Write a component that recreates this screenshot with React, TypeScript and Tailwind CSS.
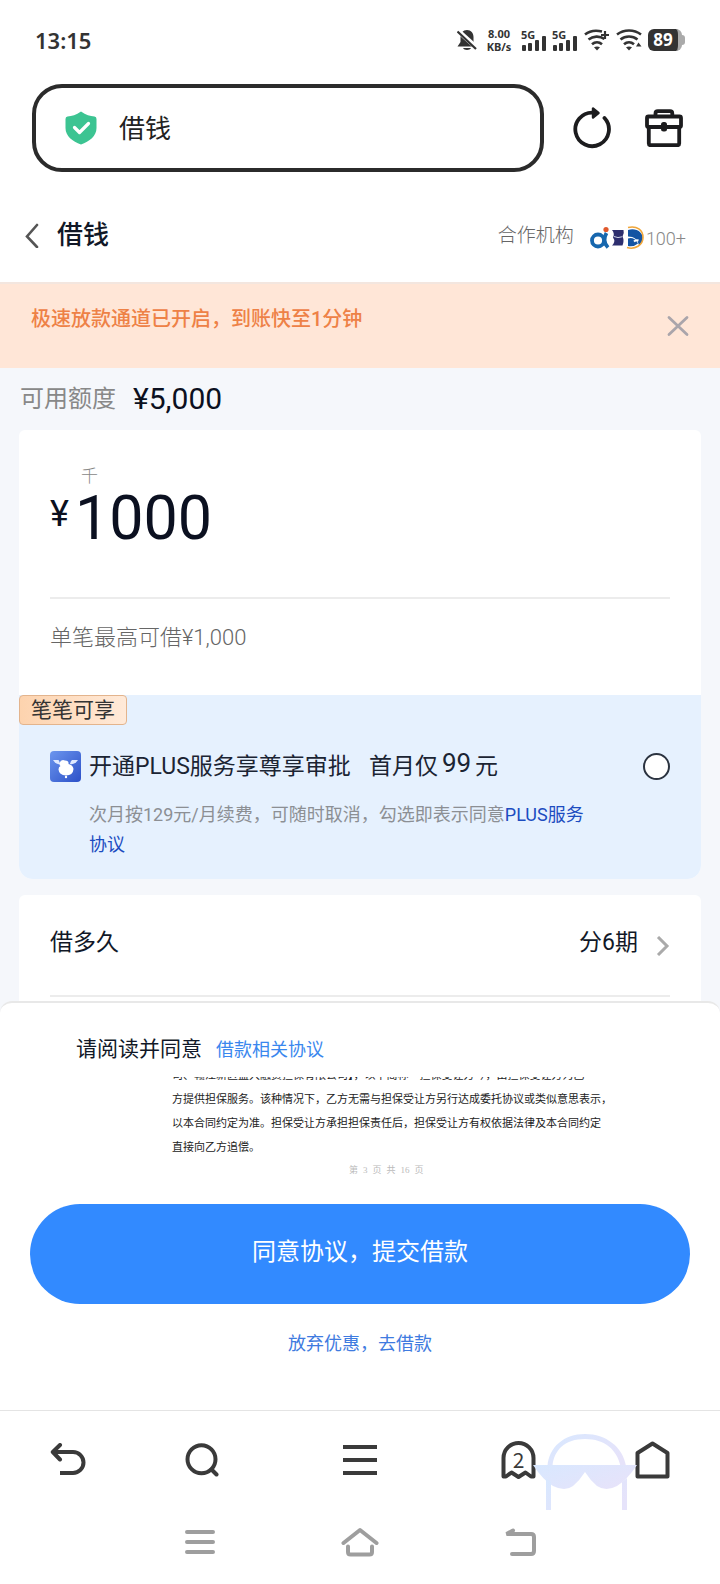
import React, { useState } from 'react';

const contractLines = [
  '司、赣江新区盈大融资担保有限公司】，以下简称“担保受让方”），由担保受让方为乙',
  '方提供担保服务。该种情况下，乙方无需与担保受让方另行达成委托协议或类似意思表示，',
  '以本合同约定为准。担保受让方承担担保责任后，担保受让方有权依据法律及本合同约定',
  '直接向乙方追偿。',
];

const Signal5G: React.FC = () => (
  <svg width="26" height="26" viewBox="0 0 26 26" fill="#333">
    <text x="0" y="12" fontSize="11" fontWeight="700" fontFamily="Noto Sans, sans-serif">5G</text>
    <rect x="1" y="18" width="4" height="6" rx="1" />
    <rect x="7" y="16" width="4" height="8" rx="1" />
    <rect x="14" y="13" width="4" height="11" rx="1" />
    <rect x="21" y="9" width="4" height="15" rx="1" />
  </svg>
);

const Wifi: React.FC<{ plus?: boolean }> = ({ plus }) => (
  <svg width="26" height="22" viewBox="0 0 26 22" fill="none" stroke="#333" strokeWidth="2.6">
    {plus ? <path d="M1 5.5C6 1.500 12 1 18 2.500" /> : <path d="M1 5.5C8 .2 18 .2 25 5.5" />}
    <path d={plus ? 'M4.500 10.500C9 7 15.500 6.500 20.500 10' : 'M4.500 10.500C9.500 6.500 16.500 6.500 21.500 10.500'} />
    <path d="M8 15.200C11 12.600 15 12.600 18 15.200" />
    <path d="M10 18.200q3-1.500 6 0L13 21.500z" fill="#333" stroke="none" />
    {plus ? <path d="M21 2v8M17 6h8" strokeWidth="2.200" /> : <path d="M20 17.500L22.500 13.500 25.500 17.500z" fill="#333" stroke="none" />}
  </svg>
);

const StatusBar: React.FC = () => (
  <div className="flex h-20 items-center justify-between px-[35px] text-[#333]">
    <span className="font-['Noto_Sans','Noto_Sans_CJK_SC',sans-serif] text-[22px] font-semibold">13:15</span>
    <div className="flex items-center gap-1.5">
      <svg width="20" height="22" viewBox="0 0 20 22" className="mr-0.5">
        <path d="M10 1c4 0 6.500 3 6.500 7v5l3 4.500H.5l3-4.500V8c0-4 2.500-7 6.500-7z" fill="#333" />
        <path d="M6 19h8c-1 2.600-7 2.600-8 0z" fill="#333" />
        <path d="M0 1l20 18" stroke="#fff" strokeWidth="5" />
        <path d="M.5 2.500L19 20" stroke="#333" strokeWidth="2.200" />
      </svg>
      <div className="mr-0.5 w-[28px] text-center font-['Noto_Sans',sans-serif] text-[11px] leading-[13px] font-bold">
        <div>8.00</div>
        <div>KB/s</div>
      </div>
      <div className="flex gap-[5px]">
        <Signal5G />
        <Signal5G />
      </div>
      <Wifi plus />
      <Wifi />
      <div className="flex items-center">
        <div className="flex h-[22px] w-[34px] items-center justify-center rounded-md border-r-4 border-[#aaa] bg-[#333] font-['Noto_Sans',sans-serif] text-[17px] font-bold text-white">
          89
        </div>
        <div className="h-2.5 w-[3px] rounded-r-sm bg-[#aaa]" />
      </div>
    </div>
  </div>
);

const AddressBar: React.FC = () => (
  <div className="flex items-center gap-[29px] pt-1 pr-[37px] pl-8">
    <label className="flex h-[88px] min-w-0 flex-1 items-center gap-[22px] rounded-[30px] border-4 border-[#2b2b2b] pl-[29px]">
      <svg width="32" height="34" viewBox="0 0 32 34" className="shrink-0">
        <path d="M16 .5c5 3.500 9 4.500 13.500 5Q31.500 5.700 31.500 8v9c0 8-7 13.500-15.500 16.500C7.500 30.500.5 25 .5 17V8Q.5 5.700 2.500 5.500C7 5 11 4 16 .5z" fill="#3cc492" />
        <path d="M9.500 16.500l5 5 9-9" fill="none" stroke="#fff" strokeWidth="3.200" strokeLinecap="round" strokeLinejoin="round" />
      </svg>
      <input aria-label="地址栏" defaultValue="借钱" className="w-full min-w-0 bg-transparent pt-0.5 text-[26px] text-[#222] outline-none" />
    </label>
    <div className="flex items-center gap-[34px]">
      <button aria-label="刷新">
        <svg width="38" height="42" viewBox="0 0 38 42" fill="none" stroke="#1c1c1e" strokeWidth="3.800" strokeLinecap="round">
          <path d="M31.500 11A16.800 16.800 0 1 1 20 5.600" />
          <path d="M20 1.500v9l5.500-4.500z" fill="#1c1c1e" strokeWidth="2.400" strokeLinejoin="round" />
        </svg>
      </button>
      <button aria-label="工具箱">
        <svg width="38" height="38" viewBox="0 0 38 38" fill="none" stroke="#1c1c1e" strokeWidth="3.800" strokeLinejoin="round">
          <path d="M10.500 7.500V4.500Q10.500 2.200 12.800 2.200H25Q27.300 2.200 27.300 4.500V7.500" />
          <rect x="2" y="7.500" width="34" height="10.500" rx="1.500" />
          <path d="M3.800 18V34.500Q3.800 36.200 5.500 36.200H32.500Q34.200 36.200 34.200 34.500V18" />
          <rect x="16" y="13" width="6" height="9.500" rx="2.500" fill="#1c1c1e" stroke="none" />
        </svg>
      </button>
    </div>
  </div>
);

const PageHeader: React.FC = () => (
  <header className="flex h-[110px] items-center justify-between pt-4 pr-[34px] pl-[25px]">
    <div className="flex items-center gap-[18px]">
      <button aria-label="返回">
        <svg width="14" height="26" viewBox="0 0 14 26" fill="none" stroke="#555" strokeWidth="2.600" strokeLinecap="round">
          <path d="M12 3L2 14.500 12 25" />
        </svg>
      </button>
      <h1 className="text-[26px] font-medium text-[#111827]">借钱</h1>
    </div>
    <div className="flex items-center">
      <span className="mr-4 pt-0.5 text-[19px] font-light text-[#666]">合作机构</span>
      <svg width="54" height="24" viewBox="0 0 54 24" className="mt-1.5">
        <circle cx="8" cy="14.500" r="6" fill="none" stroke="#1767ae" strokeWidth="3.800" />
        <path d="M16.500 7c-3 5-3 10 1.500 14.500" fill="none" stroke="#1767ae" strokeWidth="3.800" />
        <circle cx="16" cy="3.500" r="2.600" fill="#e0592c" />
        <path d="M22 4h11.500q1 3-1 6.500 2 4 0 9H22q4-4 1-8 2-4-1-7.500z" fill="#2d2e6e" />
        <path d="M24 10.500q4 2 8 .3" fill="none" stroke="#cdd3e8" strokeWidth="1" />
        <path d="M38 4c8-2.500 15 2 15 9-.5 3-2 5-4 6.500-1-6-5-9-11-9z" fill="#1454a3" />
        <path d="M38 20v-7.500q6-2 10 5-4 3.500-10 2.500z" fill="#1454a3" />
        <path d="M44 15.500q2-2 4.500-1" fill="none" stroke="#fff" strokeWidth="2" />
        <path d="M38 1.500C47-.5 53 4 53 11.500S45 24 37 21.500" fill="none" stroke="#f0a63a" strokeWidth="1.600" />
      </svg>
      <span className="ml-0.5 pt-2 text-lg font-light text-[#888]">100+</span>
    </div>
  </header>
);

const PromoBanner: React.FC = () => (
  <div className="flex h-[86px] items-center justify-between border-t-2 border-[#f3e6df] bg-[#ffe6d7] px-[31px]">
    <p className="pb-3.5 text-xl font-medium text-[#ee8146]">极速放款通道已开启，到账快至1分钟</p>
    <button aria-label="关闭">
      <svg width="22" height="22" viewBox="0 0 22 22" stroke="#aaa5ab" strokeWidth="2.800" strokeLinecap="round">
        <path d="M2 2.500l18 17M20 2.500L2 19.500" />
      </svg>
    </button>
  </div>
);

const PlusOffer: React.FC = () => {
  const [joined, setJoined] = useState(false);

  return (
    <section className="rounded-b-[14px] bg-[#e6f1fe] pb-[19px]">
      <span className="flex h-[30px] w-[108px] items-center justify-center rounded-sm border border-[#e3b48d] bg-linear-to-r from-[#fdd3ae] to-[#ffead9] pt-0.5 text-[21px] text-[#333]">
        笔笔可享
      </span>
      <div className="mt-[26px] flex h-[31px] items-center pr-[31px] pl-[31px]">
        <svg width="31" height="31" viewBox="0 0 31 31">
          <defs>
            <linearGradient id="plusBg" x1="0" y1="0" x2="1" y2="1">
              <stop offset="0" stopColor="#6c96ee" />
              <stop offset="1" stopColor="#2c50c8" />
            </linearGradient>
          </defs>
          <rect width="31" height="31" rx="4" fill="url(#plusBg)" />
          <path d="M3 9h5.500q1 1 1.500 4-4 1-7-4zM28 9h-6q-1.500 1-2 4 5 1 8-4z" fill="#dfe9ff" />
          <path d="M9.500 12Q11 8 15 9.500Q19 9.500 18.500 13Q23 14 23.500 18Q23 24.500 16 24.500Q9 24 8.500 18.500Q8.500 15.500 10.500 15Q9 14 9.500 12z" fill="#fff" />
          <circle cx="16" cy="26" r="1.200" fill="#fff" />
        </svg>
        <label htmlFor="plus" className="ml-2 flex flex-1 items-center pt-0.5 text-[23px] text-[#1b2433]">
          <span>开通PLUS服务享尊享审批</span>
          <span className="ml-[18px]">首月仅</span>
          <span className="mx-1 pb-2 text-[26px]">99</span>
          <span>元</span>
        </label>
        <input
          id="plus"
          type="radio"
          checked={joined}
          onChange={() => setJoined(true)}
          className="size-[27px] appearance-none rounded-full border-2 border-[#2b3340] bg-white checked:bg-[#328aff]"
        />
      </div>
      <p className="mt-[18px] pr-[112px] pl-[70px] text-lg leading-[30px] text-[#8c8f94]">
        次月按129元/月续费，可随时取消，勾选即表示同意
        <a href="#plus-terms" className="text-[#1c4cc0]">PLUS服务协议</a>
      </p>
    </section>
  );
};

const LoanForm: React.FC = () => {
  const [amount, setAmount] = useState('1000');

  return (
    <main className="bg-[#f5f7fb] px-[19px]">
      <div className="flex h-[62px] items-center gap-[17px] pl-px">
        <span className="text-2xl text-[#888]">可用额度</span>
        <span className="text-3xl text-[#0b1020]">¥5,000</span>
      </div>

      <div className="rounded-t-md rounded-b-[14px] bg-white">
        <div className="px-[31px] pt-9 pb-5">
          <div className="pl-[31px] text-[17px] leading-5 font-light text-[#888]">千</div>
          <div className="flex h-16 items-center">
            <label htmlFor="amount" className="w-[26px] pb-2 text-4xl text-[#0b1020]">¥</label>
            <input
              id="amount"
              value={amount}
              onChange={(e) => setAmount(e.target.value)}
              className="h-16 w-full min-w-0 bg-transparent text-[61px] leading-none text-[#0b1020] outline-none"
            />
          </div>
          <div className="mt-[47px] flex h-[78px] items-center border-t-2 border-[#ececec] text-[22px] font-light text-[#666]">
            单笔最高可借¥1,000
          </div>
        </div>
        <PlusOffer />
      </div>

      <div className="mt-4 rounded-t-md bg-white px-[31px] pb-1">
        <button className="flex h-[94px] w-full items-center pt-0.5 text-[23px] text-[#111827]">
          <span className="flex-1 text-left">借多久</span>
          <span className="mr-[18px]">分6期</span>
          <svg width="14" height="20" viewBox="0 0 14 20" fill="none" stroke="#aaa" strokeWidth="3" className="mt-1.5">
            <path d="M2 1l9 9-9 9" />
          </svg>
        </button>
        <div className="mt-1.5 border-t-2 border-[#ececec]" />
      </div>
    </main>
  );
};

const AgreementSheet: React.FC = () => (
  <div className="bg-[#f5f7fb]">
    <section className="rounded-t-xl border-t-2 border-[#e8e8e8] bg-white px-[30px] pt-8 pb-12">
      <div className="flex h-[30px] items-center gap-3.5 pl-[46px]">
        <span className="text-[21px] text-[#111827]">请阅读并同意</span>
        <a href="#loan-terms" className="text-lg text-[#3a87ee]">借款相关协议</a>
      </div>

      {/* Contract preview, scrolled to the end of the page */}
      <div className="mt-3 flex h-[103px] flex-col justify-end overflow-hidden pl-[142px] font-['Liberation_Serif','Noto_Sans_CJK_SC',serif]">
        <div className="font-['Noto_Sans_CJK_SC',sans-serif] text-[11px] leading-6 whitespace-nowrap text-[#222]">
          {contractLines.map((line) => (
            <div key={line}>{line}</div>
          ))}
        </div>
        <div className="flex h-[22px] shrink-0 items-center gap-[5px] pt-1 pl-[177px] text-[9px] text-[#bbb]">
          <span>第</span>
          <span>3</span>
          <span>页</span>
          <span>共</span>
          <span>16</span>
          <span>页</span>
        </div>
      </div>

      <button className="mt-6 flex h-[100px] w-full items-center justify-center rounded-full bg-[#328aff] pb-1 text-2xl text-white">
        同意协议，提交借款
      </button>
      <button className="mt-[22px] block h-9 w-full text-center text-lg text-[#3f7be0]">放弃优惠，去借款</button>
    </section>
  </div>
);

const BrowserToolbar: React.FC = () => (
  <nav className="relative grid h-[101px] grid-cols-[136fr_132fr_184fr_132fr_136fr] items-center justify-items-center border-t border-[#e4e4e4] pb-0.5">
    <button aria-label="后退">
      <svg width="36" height="34" viewBox="0 0 36 34" fill="none" stroke="#3a3a3a" strokeWidth="4">
        <path d="M3 9H23a10.500 10.500 0 0 1 0 21H10" />
        <path d="M10 2L2.800 9l7.200 7.500" strokeLinecap="round" strokeLinejoin="round" />
      </svg>
    </button>
    <button aria-label="搜索">
      <svg width="34" height="34" viewBox="0 0 34 34" fill="none" stroke="#3a3a3a" strokeWidth="4">
        <circle cx="16.500" cy="16.300" r="14" />
        <path d="M26.500 26.500l5 5" strokeLinecap="round" />
      </svg>
    </button>
    <button aria-label="菜单">
      <svg width="34" height="32" viewBox="0 0 34 32" stroke="#3a3a3a" strokeWidth="4">
        <path d="M0 3h34M0 16h34M0 29h34" />
      </svg>
    </button>
    <button aria-label="标签页">
      <svg width="35" height="38" viewBox="0 0 35 38" fill="none" stroke="#3a3a3a" strokeWidth="4" strokeLinejoin="round">
        <path d="M2.500 35.500L5 35.500L10.500 31.500l7 4.500 7-4.500L30 35.500H32.500V17a15 15 0 0 0-30 0z" />
        <text x="17.500" y="27" textAnchor="middle" fontSize="21" fontFamily="Noto Sans CJK SC, sans-serif" fill="#3a3a3a" stroke="none">2</text>
      </svg>
    </button>
    <button aria-label="主页">
      <svg width="35" height="38" viewBox="0 0 35 38" fill="none" stroke="#3a3a3a" strokeWidth="4" strokeLinejoin="round">
        <path d="M2.500 12L17.500 2.500l15 9.500V35.500h-30z" />
      </svg>
    </button>

    {/* Incognito mascot peeking over the toolbar */}
    <svg width="104" height="77" viewBox="0 0 104 77" className="pointer-events-none absolute top-[23px] right-[83px]">
      <defs>
        <linearGradient id="mascot" x1="0" y1="0" x2="1" y2="0.6">
          <stop offset="0" stopColor="#d8e8ff" />
          <stop offset="1" stopColor="#e6e3fa" />
        </linearGradient>
      </defs>
      <g fill="url(#mascot)">
        <path d="M14.500 32C16 13 31 0 52 0s38 13 41 32h-5.500C84 16 72 5 52 5S21 16 19.500 32z" />
        <path d="M0 31H104Q94 46 84 52Q73 58 64 52Q57 46 52 38Q47 46 40 52Q32 58 20 52Q10 46 0 31z" />
        <path d="M13 44l5 4V76h-5zM89 48l5-4V76h-5z" />
      </g>
    </svg>
  </nav>
);

const SystemNav: React.FC = () => (
  <div className="grid h-[73px] grid-cols-3 items-center justify-items-center px-[120px] pb-3">
    <button aria-label="最近任务">
      <svg width="30" height="26" viewBox="0 0 30 26" stroke="#9e9e9e" strokeWidth="4" strokeLinecap="round">
        <path d="M2 3h26M2 13h26M2 23h26" />
      </svg>
    </button>
    <button aria-label="桌面">
      <svg width="38" height="30" viewBox="0 0 38 30" fill="none" stroke="#9e9e9e" strokeWidth="4" strokeLinecap="round" strokeLinejoin="round">
        <path d="M2.500 16L19 3l16.500 13" />
        <path d="M7 19.500V25q0 2.500 2.500 2.500h19Q31 27.500 31 25v-5.500" />
      </svg>
    </button>
    <button aria-label="系统返回">
      <svg width="32" height="28" viewBox="0 0 32 28" fill="none" stroke="#9e9e9e" strokeWidth="4" strokeLinecap="round">
        <path d="M9 2.500L2.500 6H27q3 0 3 3V23q0 3-3 3H8" />
      </svg>
    </button>
  </div>
);

const App: React.FC = () => (
  <div className="min-h-screen w-full bg-white font-['Roboto','Noto_Sans_CJK_SC',sans-serif]">
    <StatusBar />
    <AddressBar />
    <PageHeader />
    <PromoBanner />
    <LoanForm />
    <AgreementSheet />
    <BrowserToolbar />
    <SystemNav />
  </div>
);

export default App;
